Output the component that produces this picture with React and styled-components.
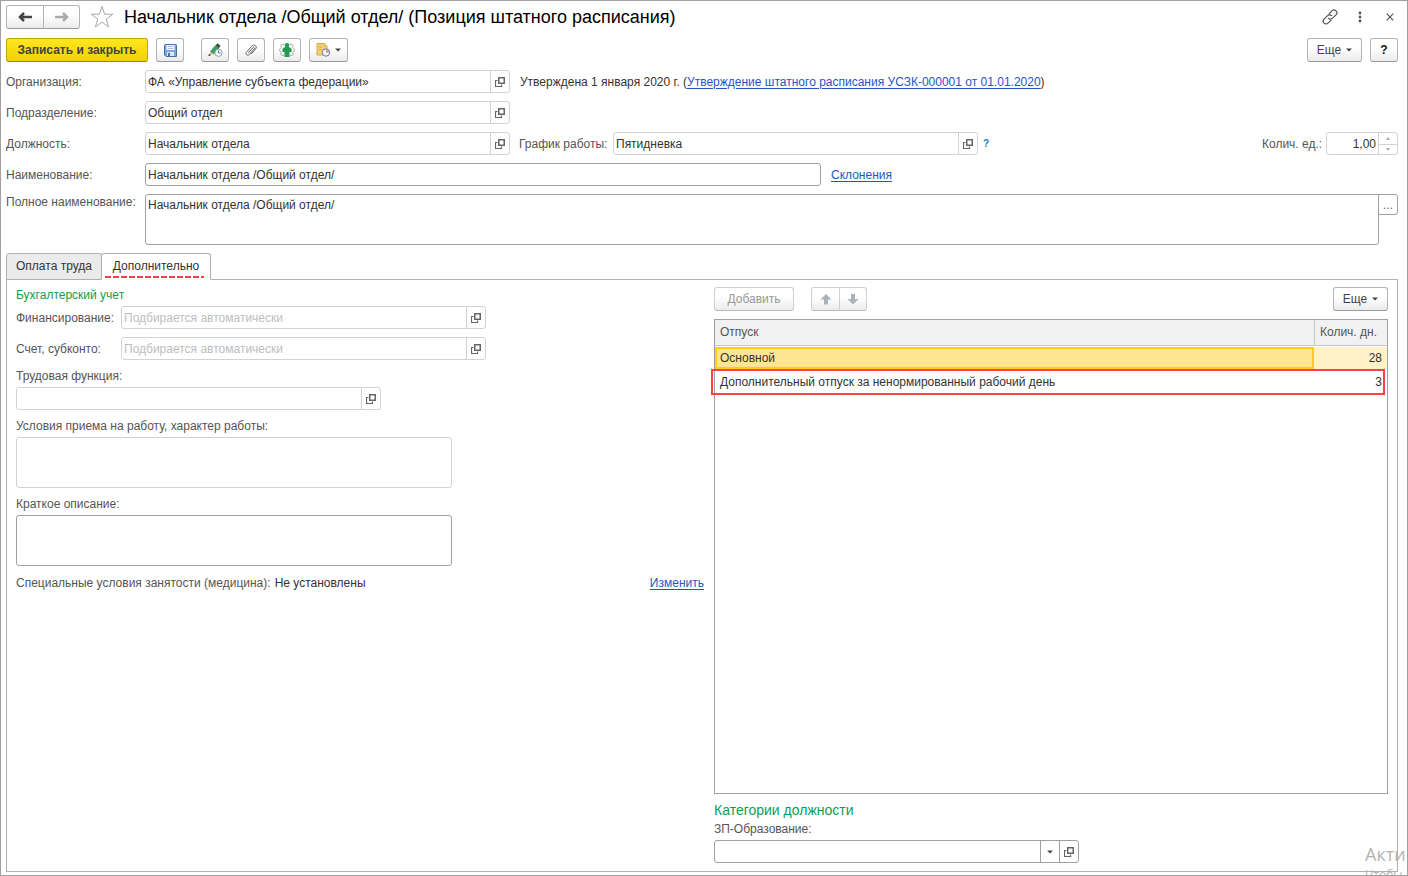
import React, { useId, useState } from 'react';
import styled, { createGlobalStyle, css } from 'styled-components';

const colors = {
  text: '#333',
  label: '#555',
  link: '#1f55c4',
  green: '#0f9d4f',
  red: '#fb4141',
  frame: '#a0a0a0',
  border: '#a0a0a0',
  softBorder: '#d2d2d2',
  placeholder: '#bdbdbd',
};

const GlobalStyle = createGlobalStyle`
  * {
    box-sizing: border-box;
  }

  body {
    margin: 0;
    background: #fff;
    color: ${colors.text};
    font: 12px/16px 'Liberation Sans', Arial, sans-serif;
  }

  button, input, textarea, select {
    margin: 0;
    color: inherit;
    font: inherit;
  }

  svg {
    display: block;
    flex: none;
  }
`;

const Window = styled.main`
  position: relative;
  display: flex;
  flex-direction: column;
  gap: 8px;
  min-height: 100vh;
  padding: 3px 9px 3px 5px;
  border: 1px solid ${colors.frame};
  overflow: hidden;
`;

const TitleBar = styled.header`
  display: flex;
  align-items: center;
  height: 26px;
`;

const Title = styled.h1`
  flex: 1;
  margin: 0 0 0 10px;
  color: #000;
  font-size: 18px;
  font-weight: normal;
  line-height: 24px;
  white-space: nowrap;
`;

const WindowButtons = styled.div`
  display: flex;
  gap: 6px;
  margin-right: -4px;
`;

const IconButton = styled.button`
  display: flex;
  align-items: center;
  justify-content: center;
  width: 24px;
  height: 24px;
  padding: 0;
  border: 0;
  background: none;
`;

const StarButton = styled(IconButton)`
  margin-left: 10px;
`;

const Toolbar = styled.div`
  display: flex;
  align-items: center;
  gap: 8px;
`;

const Spacer = styled.div`
  flex: 1;
`;

const Button = styled.button`
  display: flex;
  align-items: center;
  justify-content: center;
  gap: ${({ $gap }) => $gap || 4}px;
  min-width: ${({ $width }) => $width || 28}px;
  height: 24px;
  padding: 0;
  border: 1px solid #b4b4b4;
  border-bottom-color: #999;
  border-radius: 3px;
  background: linear-gradient(#fff 40%, #ebebeb);
  color: #444;
  white-space: nowrap;

  &:disabled {
    border-color: #d0d0d0;
    border-bottom-color: #bbb;
    color: #999;
  }
`;

const PrimaryButton = styled(Button)`
  border-color: #c1a500;
  border-bottom-color: #9d8700;
  background: linear-gradient(#ffe61e, #f3d200);
  color: #444;
  font-weight: bold;
`;

const HelpButton = styled(Button)`
  color: #111;
  font-weight: bold;
`;

const ButtonGroup = styled.div`
  display: flex;
  margin-left: ${({ $offset }) => $offset || 0}px;

  > button:first-child {
    border-top-right-radius: 0;
    border-bottom-right-radius: 0;
  }

  > button:last-child {
    margin-left: -1px;
    border-top-left-radius: 0;
    border-bottom-left-radius: 0;
  }
`;

const ToolGroup = styled(Toolbar)`
  margin-left: 9px;
`;

const Row = styled.div`
  display: flex;
  align-items: ${({ $top }) => ($top ? 'flex-start' : 'center')};
  min-height: 18px;
`;

const Label = styled.label`
  flex: none;
  width: ${({ $width }) => ($width ? `${$width}px` : 'auto')};
  color: ${colors.label};
  white-space: nowrap;
`;

const Text = styled.span`
  margin-left: ${({ $gap }) => $gap || 0}px;
  white-space: nowrap;
`;

const Link = styled.a`
  color: ${colors.link};
  text-decoration: underline;
  text-underline-offset: 2px;
`;

const Hint = styled.button`
  margin-left: 5px;
  padding: 0;
  border: 0;
  background: none;
  color: #1683c8;
  font-size: 10px;
  font-weight: bold;
`;

const FieldBox = styled.div`
  display: flex;
  flex: 0 1 ${({ $width }) => $width}px;
  height: 23px;
  min-width: 0;
  max-width: ${({ $width }) => $width}px;
  border: 1px solid
    ${({ $strong }) => ($strong ? colors.border : colors.softBorder)};
  border-radius: 3px;
  background: #fff;

  && > * + * {
    border-left: 1px solid
      ${({ $strong }) => ($strong ? colors.border : colors.softBorder)};
  }
`;

const Input = styled.input`
  flex: 1;
  width: 0;
  min-width: 0;
  padding: 0 2px;
  border: 0;
  outline: 0;
  background: none;
  text-align: ${({ $right }) => ($right ? 'right' : 'left')};

  &::placeholder {
    color: ${colors.placeholder};
    opacity: 1;
  }
`;

const FieldButton = styled.button`
  display: flex;
  flex: none;
  align-items: center;
  justify-content: center;
  width: 19px;
  padding: 0;
  border: 0;
  background: none;
`;

const Spin = styled.div`
  display: grid;
  grid-template-rows: 1fr 1fr;
  width: 19px;

  button {
    display: flex;
    align-items: center;
    justify-content: center;
    padding: 0;
    border: 0;
    background: none;
  }

  button + button {
    border-top: 1px solid ${colors.softBorder};
  }
`;

const areaStyle = css`
  display: block;
  height: 51px;
  padding: 2px;
  border: 1px solid
    ${({ $strong }) => ($strong ? colors.border : colors.softBorder)};
  border-radius: 3px;
  outline: 0;
  background: #fff;
  resize: none;
`;

const TextArea = styled.textarea`
  ${areaStyle}
  width: 436px;
  max-width: 100%;
`;

const WideTextArea = styled.textarea`
  ${areaStyle}
  flex: 1;
  border-top-right-radius: 0;
`;

const MoreButton = styled.button`
  width: 20px;
  height: 21px;
  margin-left: -1px;
  padding: 0;
  border: 1px solid ${colors.border};
  border-radius: 0 3px 3px 0;
  background: #fff;
  color: #666;
`;

const Tabs = styled.section`
  display: flex;
  flex: 1;
  flex-direction: column;
`;

const TabList = styled.div`
  display: flex;
  z-index: 1;
  margin-bottom: -1px;
`;

const Tab = styled.button`
  position: relative;
  min-width: ${({ $width }) => $width}px;
  height: 27px;
  padding: 0 8px 2px;
  border: 1px solid #b0b0b0;
  border-radius: 3px 3px 0 0;
  background: #ebebeb;

  & + & {
    margin-left: -1px;
  }

  &[aria-selected='true'] {
    border-bottom-color: #fff;
    background: #fff;
  }
`;

const TabMark = styled.span`
  position: absolute;
  right: 6px;
  bottom: 1px;
  left: 3px;
  height: 2px;
  background: repeating-linear-gradient(
    90deg,
    ${colors.red} 0 6px,
    transparent 6px 8px
  );
`;

const Panel = styled.div`
  display: grid;
  flex: 1;
  grid-template-columns: minmax(0, 344fr) minmax(0, 337fr);
  gap: 10px;
  padding: 7px 9px 8px;
  border: 1px solid #b0b0b0;
`;

const Column = styled.div`
  display: flex;
  flex-direction: column;
  gap: 8px;
`;

const Group = styled.div`
  display: flex;
  flex-direction: column;
  gap: 3px;

  > ${FieldBox} {
    flex: none;
  }
`;

const Heading = styled.h2`
  margin: 0;
  color: ${colors.green};
  font-size: ${({ $large }) => ($large ? 14 : 12)}px;
  font-weight: normal;
  line-height: 16px;
`;

const TableBox = styled.div`
  flex: 1;
  min-height: 120px;
  border: 1px solid ${colors.border};
`;

const Table = styled.table`
  width: 100%;
  border-collapse: separate;
  border-spacing: 0;
  table-layout: fixed;

  th,
  td {
    height: 24px;
    padding: 0 5px;
    text-align: left;
    white-space: nowrap;
  }

  th {
    height: 26px;
    padding-bottom: 2px;
    border-bottom: 1px solid #c8c8c8;
    background: #f1f1f1;
    color: ${colors.label};
    font-weight: normal;
  }

  th:last-child {
    width: 73px;
    border-left: 1px solid #c8c8c8;
  }

  td:last-child {
    text-align: right;
  }
`;

const TableRow = styled.tr`
  position: relative;

  ${({ $selected }) =>
    $selected &&
    css`
      td {
        background: #fff2c8;
        background-clip: padding-box;
        border-top: 1px solid #fff;
        border-bottom: 1px solid #fff;
      }

      td:first-child {
        background: #ffe591;
        box-shadow: inset 0 0 0 2px #fecb20;
      }
    `}
`;

const RowMark = styled.span`
  position: absolute;
  top: -1px;
  right: 2px;
  bottom: -1px;
  left: -4px;
  border: 2px solid ${colors.red};
  pointer-events: none;
`;

const SelectBox = styled.div`
  position: relative;
  display: flex;
  flex: 1;
`;

const Select = styled.select`
  flex: 1;
  padding: 0 22px 0 2px;
  border: 0;
  outline: 0;
  appearance: none;
  background: none;
`;

const SelectArrow = styled.span`
  position: absolute;
  top: 0;
  right: 0;
  bottom: 0;
  display: flex;
  align-items: center;
  justify-content: center;
  width: 19px;
  border-left: 1px solid ${colors.border};
  pointer-events: none;
`;

const Watermark = styled.div`
  position: absolute;
  top: 842px;
  right: 0;
  width: 42px;
  height: 32px;
  overflow: hidden;
  color: #b4b4b4;
  font-family: 'Open Sans', 'Noto Sans', sans-serif;
  font-size: 18px;
  line-height: 22px;
  white-space: nowrap;
  pointer-events: none;

  small {
    display: block;
    font-size: 12px;
    line-height: 20px;
  }
`;

const OpenIcon = () => (
  <svg width="10" height="10" viewBox="0 0 10 10" fill="none" stroke="#666">
    <path d="M3.75.75h5.5v5.5h-5.5z" strokeWidth="1.5" />
    <path d="M2.500 3.500h-2v6h6v-2" strokeWidth="1.200" />
  </svg>
);

const ArrowIcon = ({ color, right }) => (
  <svg width="14" height="12" viewBox="0 0 14 12" fill="none" stroke={color}>
    <path
      d={right ? 'M0 6h12M8 2l4 4-4 4' : 'M14 6H2M6 2L2 6l4 4'}
      strokeWidth="2.500"
    />
  </svg>
);

const StarIcon = () => (
  <svg width="24" height="24" viewBox="0 0 24 24" fill="none" stroke="#a8a8a8">
    <path d="M12 1.500l2.600 7.700h8.200l-6.600 4.900 2.500 7.900L12 17.200 5.300 22l2.500-7.900L1.200 9.200h8.200z" />
  </svg>
);

const CaretIcon = () => (
  <svg width="6" height="4" viewBox="0 0 6 4" fill="#444">
    <path d="M0 .5h6L3 3.500z" />
  </svg>
);

const SpinIcon = ({ down }) => (
  <svg width="4" height="3" viewBox="0 0 4 3" fill="#aaa">
    <path d={down ? 'M0 0h4L2 3z' : 'M0 3h4L2 0z'} />
  </svg>
);

const LinkIcon = () => (
  <svg
    width="16"
    height="16"
    viewBox="0 0 24 24"
    fill="none"
    stroke="#555"
    strokeWidth="1.800"
    strokeLinecap="round"
  >
    <path d="M9.500 14a4.500 4.500 0 0 0 6.500-.2l5-5a4.200 4.200 0 0 0-6-6l-4.500 4.500" />
    <path d="M14.500 10a4.500 4.500 0 0 0-6.500.2l-5 5a4.200 4.200 0 0 0 6 6l4.500-4.500" />
  </svg>
);

const DotsIcon = () => (
  <svg width="4" height="12" viewBox="0 0 4 12" fill="#555">
    <circle cx="2" cy="2" r="1.400" />
    <circle cx="2" cy="6" r="1.400" />
    <circle cx="2" cy="10" r="1.400" />
  </svg>
);

const CloseIcon = () => (
  <svg width="8" height="8" viewBox="0 0 8 8" stroke="#555" strokeWidth="1.200">
    <path d="M.7.7l6.600 6.600M7.300.7L.7 7.300" />
  </svg>
);

const SaveIcon = () => (
  <svg width="13" height="13" viewBox="0 0 13 13">
    <path
      d="M.5 1.500a1 1 0 0 1 1-1h10a1 1 0 0 1 1 1v11H2l-1.500-1.500z"
      fill="#79a7db"
      stroke="#44719f"
    />
    <path d="M2.500 1h8v5h-8z" fill="#fff" />
    <path d="M3.500 2.500h6M3.500 4.500h6" stroke="#a9bfd6" />
    <path d="M3 8h7v4H3z" fill="#dfe8f1" />
    <path d="M4 9h2v3H4z" fill="#44719f" />
  </svg>
);

const PencilIcon = () => (
  <svg width="15" height="14" viewBox="0 0 15 14">
    <path d="M7.500 2.500L9.500.3l3 2.500-1.800 2.400z" fill="#3f4b45" />
    <path d="M7.300 2.700l3.500 2.700L5.500 11 2.500 8.500z" fill="#35a05a" stroke="#26814a" strokeWidth=".6" />
    <path d="M2.300 8.500L5.300 11l-4.600 2z" fill="#e2bd8c" />
    <path d="M1.200 10.800L2.800 12.200.3 13.200z" fill="#333" />
    <circle cx="10.500" cy="9.800" r="3.600" fill="#f4f8fb" stroke="#8ba3b6" />
    <path d="M10.500 7.500V10h2" fill="none" stroke="#5b7488" />
  </svg>
);

const ClipIcon = () => (
  <svg
    width="12"
    height="13"
    viewBox="0 0 12 13"
    fill="none"
    stroke="#666"
    strokeLinecap="round"
  >
    <path d="M3.500 8.500l4.300-4.700c.9-1 2.300.2 1.400 1.200l-5 5.600c-1.700 1.800-4.400-.4-2.800-2.300l5.700-6.400C9.300-.4 12.800 2.300 10.600 5L6.300 9.900" />
  </svg>
);

const MedicineIcon = () => (
  <svg width="16" height="14" viewBox="0 0 16 14" fill="none">
    <path
      d="M5 1.500C2 1 1 3 2.500 4.500 0 6 0 8 2.500 9.500 1 11.500 2.500 13 5 12.500M11 1.500c3-.5 4 1.500 2.500 3C16 6 16 8 13.500 9.500c1.500 2 0 3.500-2.500 3"
      stroke="#94a79a"
    />
    <circle cx="8" cy="2.300" r="2.300" fill="#239b50" />
    <path d="M6 4h4l2.500 1.500V9H10.500v5h-5V9h-2V5.500z" fill="#239b50" />
  </svg>
);

const ReportIcon = () => (
  <svg width="15" height="14" viewBox="0 0 15 14">
    <path d="M1 .5h7.500L11 3v9H1z" fill="#f2cf72" stroke="#d3aa50" />
    <path d="M8 .5V3h3" fill="#fff3cd" stroke="#d3aa50" />
    <path d="M3 4h3M3 6.500h3" stroke="#d5aa4d" />
    <circle cx="10" cy="9.500" r="3.700" fill="#f2f5fc" stroke="#6478ae" />
    <path d="M10 9.500V6.300a3.200 3.200 0 0 1 3.200 3.200z" fill="#e68a84" />
  </svg>
);

const MoveIcon = ({ down }) => (
  <svg width="12" height="11" viewBox="0 0 12 11" fill="#a9b4ba">
    <path
      d={
        down
          ? 'M4 0h4v5h3.500L6 10.500.5 5H4z'
          : 'M4 10.500h4v-5h3.500L6 0 .5 5.500H4z'
      }
    />
  </svg>
);

const Field = ({ label, labelWidth, width, strong, open, ...rest }) => {
  const id = useId();

  return (
    <>
      <Label htmlFor={id} $width={labelWidth}>
        {label}
      </Label>
      <FieldBox $width={width} $strong={strong}>
        <Input id={id} {...rest} />
        {open && (
          <FieldButton type="button" aria-label="Открыть">
            <OpenIcon />
          </FieldButton>
        )}
      </FieldBox>
    </>
  );
};

const AreaField = ({ label, strong }) => {
  const id = useId();

  return (
    <Group>
      <Label htmlFor={id}>{label}</Label>
      <TextArea id={id} $strong={strong} />
    </Group>
  );
};

const MoreMenu = () => (
  <Button type="button" $width={55} $gap={5}>
    Еще
    <CaretIcon />
  </Button>
);

const vacations = [
  { name: 'Основной', days: 28 },
  {
    name: 'Дополнительный отпуск за ненормированный рабочий день',
    days: 3,
    marked: true,
  },
];

const VacationTable = () => {
  const [selected, setSelected] = useState(0);

  return (
    <TableBox>
      <Table>
        <thead>
          <tr>
            <th scope="col">Отпуск</th>
            <th scope="col">Колич. дн.</th>
          </tr>
        </thead>
        <tbody>
          {vacations.map(({ name, days, marked }, index) => (
            <TableRow
              key={name}
              $selected={index === selected}
              onClick={() => setSelected(index)}
            >
              <td>{name}</td>
              <td>
                {days}
                {marked && <RowMark />}
              </td>
            </TableRow>
          ))}
        </tbody>
      </Table>
    </TableBox>
  );
};

const Accounting = () => (
  <Column>
    <Group>
      <Heading>Бухгалтерский учет</Heading>
      <Row>
        <Field
          label="Финансирование:"
          labelWidth={105}
          width={365}
          placeholder="Подбирается автоматически"
          open
        />
      </Row>
    </Group>
    <Row>
      <Field
        label="Счет, субконто:"
        labelWidth={105}
        width={365}
        placeholder="Подбирается автоматически"
        open
      />
    </Row>
    <Group>
      <Field label="Трудовая функция:" width={365} open />
    </Group>
    <AreaField label="Условия приема на работу, характер работы:" />
    <AreaField label="Краткое описание:" strong />
    <Row>
      <Label as="span">Специальные условия занятости (медицина):</Label>
      <Text $gap={4}>Не установлены</Text>
      <Spacer />
      <Link href="#edit">Изменить</Link>
    </Row>
  </Column>
);

const Vacations = () => (
  <Column>
    <Toolbar>
      <Button type="button" $width={80} disabled>
        Добавить
      </Button>
      <ButtonGroup $offset={9}>
        <Button type="button" $width={29} aria-label="Вверх" disabled>
          <MoveIcon />
        </Button>
        <Button type="button" $width={28} aria-label="Вниз" disabled>
          <MoveIcon down />
        </Button>
      </ButtonGroup>
      <Spacer />
      <MoreMenu />
    </Toolbar>
    <VacationTable />
    <Group>
      <Heading $large>Категории должности</Heading>
      <Label htmlFor="education">ЗП-Образование:</Label>
      <FieldBox $width={365} $strong>
        <SelectBox>
          <Select id="education" defaultValue="">
            <option value="" />
          </Select>
          <SelectArrow>
            <CaretIcon />
          </SelectArrow>
        </SelectBox>
        <FieldButton type="button" aria-label="Открыть">
          <OpenIcon />
        </FieldButton>
      </FieldBox>
    </Group>
  </Column>
);

const App = () => (
  <>
    <GlobalStyle />
    <Window>
      <TitleBar>
        <ButtonGroup>
          <Button type="button" $width={38} aria-label="Назад">
            <ArrowIcon color="#444" />
          </Button>
          <Button type="button" $width={37} aria-label="Вперед">
            <ArrowIcon color="#aaa" right />
          </Button>
        </ButtonGroup>
        <StarButton type="button" aria-label="В избранное">
          <StarIcon />
        </StarButton>
        <Title>Начальник отдела /Общий отдел/ (Позиция штатного расписания)</Title>
        <WindowButtons>
          <IconButton type="button" aria-label="Получить ссылку">
            <LinkIcon />
          </IconButton>
          <IconButton type="button" aria-label="Меню">
            <DotsIcon />
          </IconButton>
          <IconButton type="button" aria-label="Закрыть">
            <CloseIcon />
          </IconButton>
        </WindowButtons>
      </TitleBar>

      <Toolbar>
        <PrimaryButton type="button" $width={142}>
          Записать и закрыть
        </PrimaryButton>
        <Button type="button" aria-label="Записать">
          <SaveIcon />
        </Button>
        <ToolGroup>
          <Button type="button" aria-label="Изменить">
            <PencilIcon />
          </Button>
          <Button type="button" aria-label="Файлы">
            <ClipIcon />
          </Button>
          <Button type="button" aria-label="Медицина">
            <MedicineIcon />
          </Button>
          <Button type="button" $width={39} aria-label="Отчеты">
            <ReportIcon />
            <CaretIcon />
          </Button>
        </ToolGroup>
        <Spacer />
        <MoreMenu />
        <HelpButton type="button">?</HelpButton>
      </Toolbar>

      <Row>
        <Field
          label="Организация:"
          labelWidth={139}
          width={365}
          defaultValue="ФА «Управление субъекта федерации»"
          open
        />
        <Text $gap={10}>
          Утверждена 1 января 2020 г. (
          <Link href="#approval">
            Утверждение штатного расписания УСЗК-000001 от 01.01.2020
          </Link>
          )
        </Text>
      </Row>
      <Row>
        <Field
          label="Подразделение:"
          labelWidth={139}
          width={365}
          defaultValue="Общий отдел"
          open
        />
      </Row>
      <Row>
        <Field
          label="Должность:"
          labelWidth={139}
          width={365}
          defaultValue="Начальник отдела"
          open
        />
        <Text $gap={9} />
        <Field
          label="График работы:"
          labelWidth={94}
          width={365}
          defaultValue="Пятидневка"
          open
        />
        <Hint type="button">?</Hint>
        <Spacer />
        <Label htmlFor="amount" $width={64}>
          Колич. ед.:
        </Label>
        <FieldBox $width={72}>
          <Input id="amount" inputMode="decimal" defaultValue="1,00" $right />
          <Spin>
            <button type="button" aria-label="Больше">
              <SpinIcon />
            </button>
            <button type="button" aria-label="Меньше">
              <SpinIcon down />
            </button>
          </Spin>
        </FieldBox>
      </Row>
      <Row>
        <Field
          label="Наименование:"
          labelWidth={139}
          width={676}
          defaultValue="Начальник отдела /Общий отдел/"
          strong
        />
        <Text $gap={10}>
          <Link href="#declension">Склонения</Link>
        </Text>
      </Row>
      <Row $top>
        <Label htmlFor="full-name" $width={139}>
          Полное наименование:
        </Label>
        <WideTextArea
          id="full-name"
          defaultValue="Начальник отдела /Общий отдел/"
          $strong
        />
        <MoreButton type="button" aria-label="Редактировать">
          ...
        </MoreButton>
      </Row>

      <Tabs>
        <TabList role="tablist">
          <Tab type="button" role="tab" aria-selected="false" $width={96}>
            Оплата труда
          </Tab>
          <Tab type="button" role="tab" aria-selected="true" $width={110}>
            Дополнительно
            <TabMark />
          </Tab>
        </TabList>
        <Panel role="tabpanel">
          <Accounting />
          <Vacations />
        </Panel>
      </Tabs>

      <Watermark aria-hidden="true">
        Акти
        <small>Чтобы</small>
      </Watermark>
    </Window>
  </>
);

export default App;
